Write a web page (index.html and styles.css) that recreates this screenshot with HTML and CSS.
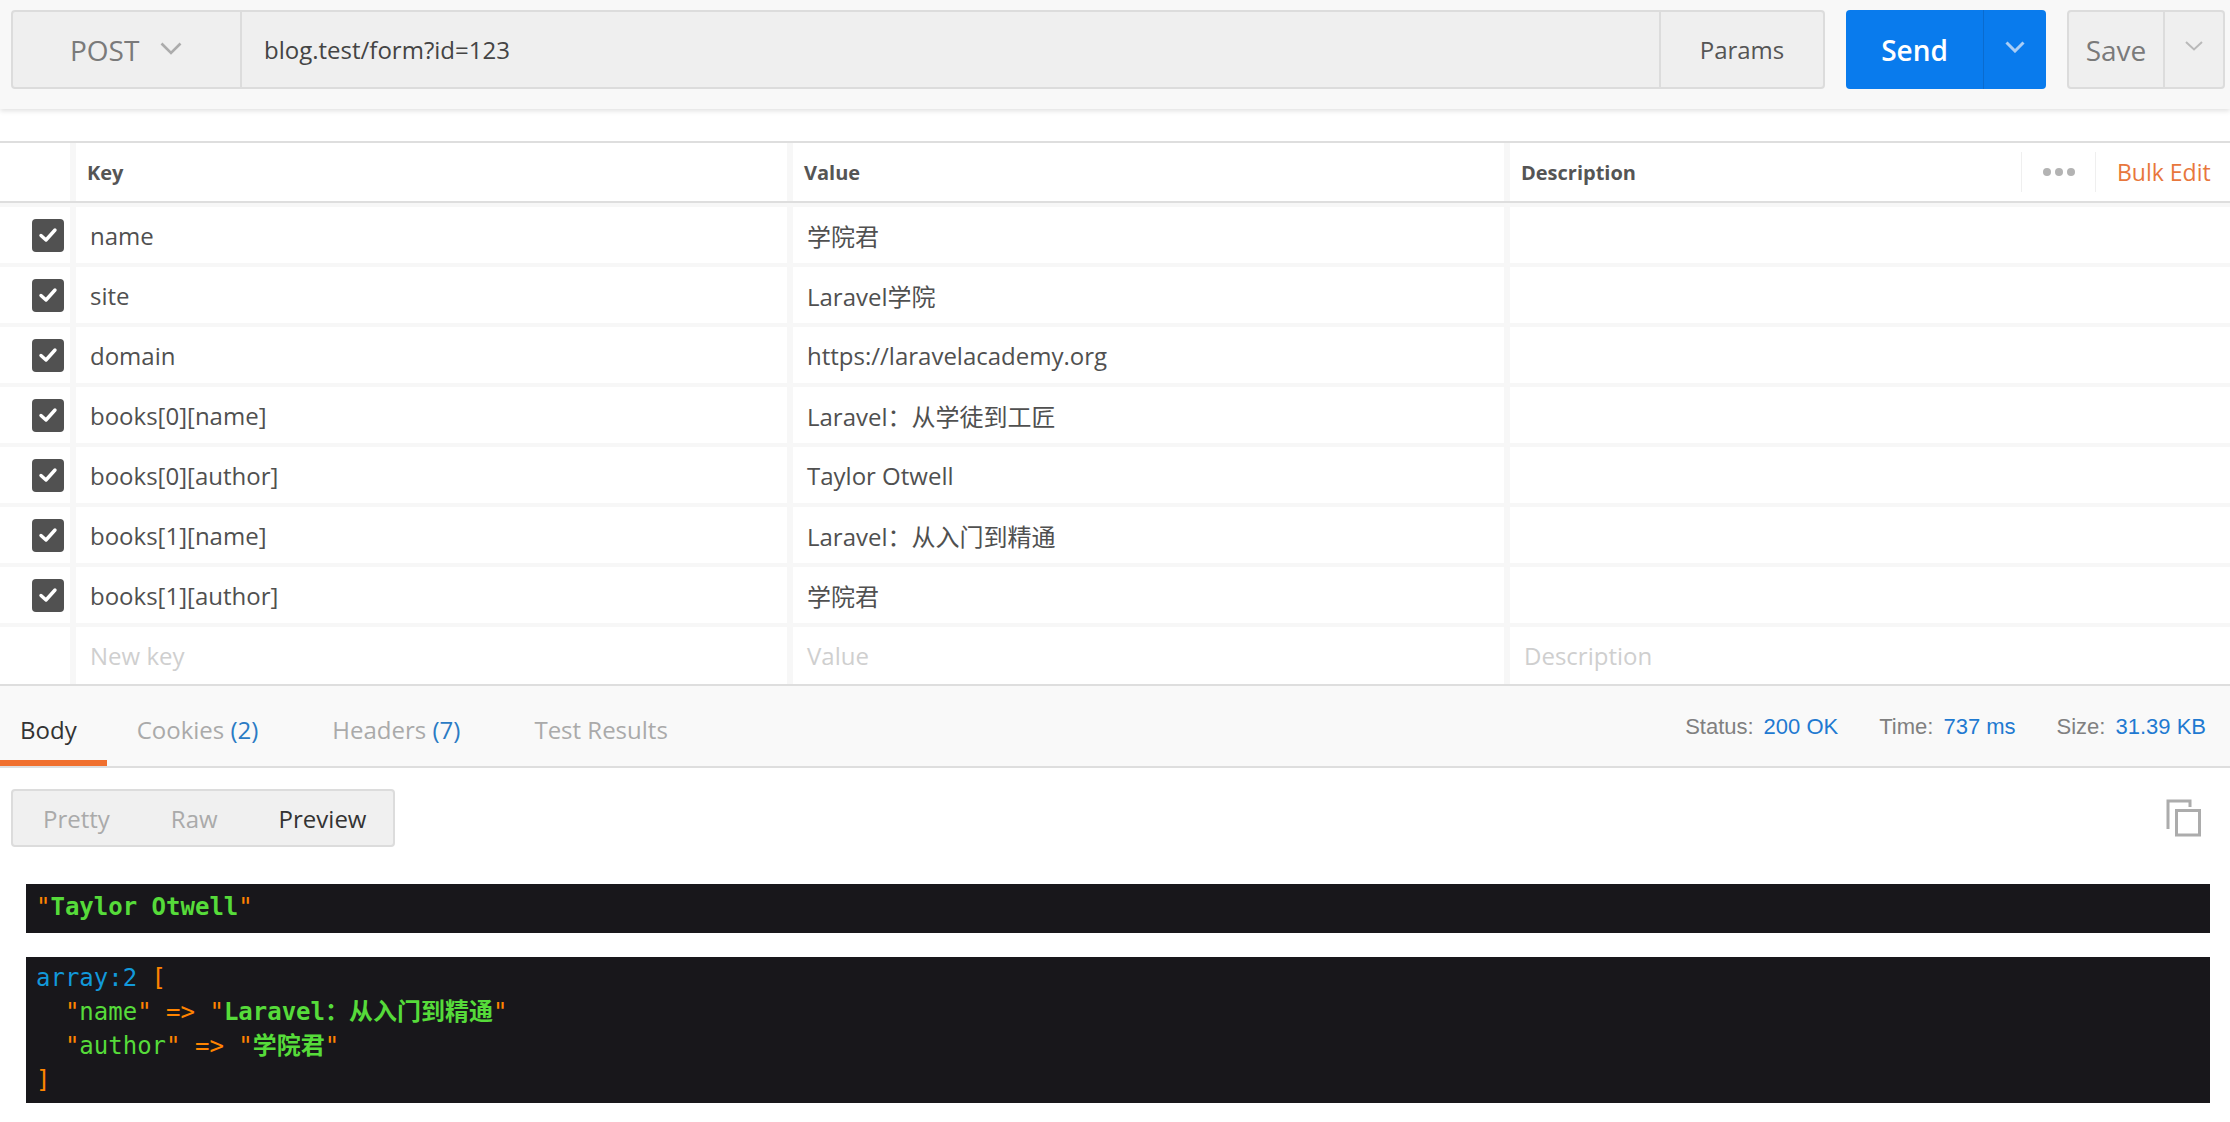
FILE: index.html
```html
<!DOCTYPE html>
<html lang="zh">
<head>
<meta charset="utf-8">
<title>Postman</title>
<link rel="stylesheet" href="styles.css">
</head>
<body>
<header class="topbar">
  <div class="req-group">
    <div class="method">
      <span>POST</span>
      <svg class="chev" width="22" height="13" viewBox="0 0 22 13"><path d="M1.5 1.5 L11 11 L20.5 1.5" fill="none" stroke="#acacac" stroke-width="2.6"/></svg>
    </div>
    <div class="url">blog.test/form?id=123</div>
    <div class="params">Params</div>
  </div>
  <div class="send">
    <div class="send-main">Send</div>
    <div class="send-drop"><svg width="20" height="12" viewBox="0 0 20 12"><path d="M1.5 1.5 L10 10 L18.5 1.5" fill="none" stroke="#a9cdf5" stroke-width="3"/></svg></div>
  </div>
  <div class="save">
    <div class="save-main">Save</div>
    <div class="save-drop"><svg width="20" height="12" viewBox="0 0 20 12"><path d="M2 2 L10 9.5 L18 2" fill="none" stroke="#b9b9b9" stroke-width="2"/></svg></div>
  </div>
</header>

<section class="kv">
  <div class="kv-row kv-head">
    <div class="c-check"></div>
    <div class="cell">Key</div>
    <div class="cell">Value</div>
    <div class="cell desc-head">
      <span class="desc-title">Description</span>
      <span class="dots"><i></i><i></i><i></i></span>
      <span class="bulk">Bulk Edit</span>
    </div>
  </div>
  <div class="kv-row">
    <div class="c-check"><span class="cb"><svg width="20" height="16" viewBox="0 0 20 16"><path d="M3 8.5 L8 13 L17 3" fill="none" stroke="#fff" stroke-width="3.4" stroke-linecap="round" stroke-linejoin="round"/></svg></span></div>
    <div class="cell">name</div><div class="cell">学院君</div><div class="cell"></div>
  </div>
  <div class="kv-row">
    <div class="c-check"><span class="cb"><svg width="20" height="16" viewBox="0 0 20 16"><path d="M3 8.5 L8 13 L17 3" fill="none" stroke="#fff" stroke-width="3.4" stroke-linecap="round" stroke-linejoin="round"/></svg></span></div>
    <div class="cell">site</div><div class="cell">Laravel学院</div><div class="cell"></div>
  </div>
  <div class="kv-row">
    <div class="c-check"><span class="cb"><svg width="20" height="16" viewBox="0 0 20 16"><path d="M3 8.5 L8 13 L17 3" fill="none" stroke="#fff" stroke-width="3.4" stroke-linecap="round" stroke-linejoin="round"/></svg></span></div>
    <div class="cell">domain</div><div class="cell">https://laravelacademy.org</div><div class="cell"></div>
  </div>
  <div class="kv-row">
    <div class="c-check"><span class="cb"><svg width="20" height="16" viewBox="0 0 20 16"><path d="M3 8.5 L8 13 L17 3" fill="none" stroke="#fff" stroke-width="3.4" stroke-linecap="round" stroke-linejoin="round"/></svg></span></div>
    <div class="cell">books[0][name]</div><div class="cell">Laravel：从学徒到工匠</div><div class="cell"></div>
  </div>
  <div class="kv-row">
    <div class="c-check"><span class="cb"><svg width="20" height="16" viewBox="0 0 20 16"><path d="M3 8.5 L8 13 L17 3" fill="none" stroke="#fff" stroke-width="3.4" stroke-linecap="round" stroke-linejoin="round"/></svg></span></div>
    <div class="cell">books[0][author]</div><div class="cell">Taylor Otwell</div><div class="cell"></div>
  </div>
  <div class="kv-row">
    <div class="c-check"><span class="cb"><svg width="20" height="16" viewBox="0 0 20 16"><path d="M3 8.5 L8 13 L17 3" fill="none" stroke="#fff" stroke-width="3.4" stroke-linecap="round" stroke-linejoin="round"/></svg></span></div>
    <div class="cell">books[1][name]</div><div class="cell">Laravel：从入门到精通</div><div class="cell"></div>
  </div>
  <div class="kv-row">
    <div class="c-check"><span class="cb"><svg width="20" height="16" viewBox="0 0 20 16"><path d="M3 8.5 L8 13 L17 3" fill="none" stroke="#fff" stroke-width="3.4" stroke-linecap="round" stroke-linejoin="round"/></svg></span></div>
    <div class="cell">books[1][author]</div><div class="cell">学院君</div><div class="cell"></div>
  </div>
  <div class="kv-row kv-new">
    <div class="c-check"></div>
    <div class="cell ph">New key</div><div class="cell ph">Value</div><div class="cell ph">Description</div>
  </div>
</section>

<section class="resp-bar">
  <nav class="tabs">
    <span class="tab active">Body</span>
    <span class="tab">Cookies <b>(2)</b></span>
    <span class="tab">Headers <b>(7)</b></span>
    <span class="tab">Test Results</span>
  </nav>
  <div class="meta">
    <span class="lbl">Status:</span><span class="val">200 OK</span>
    <span class="lbl">Time:</span><span class="val">737 ms</span>
    <span class="lbl">Size:</span><span class="val">31.39 KB</span>
  </div>
</section>

<div class="view-row">
  <div class="seg">
    <span class="seg-item">Pretty</span>
    <span class="seg-item">Raw</span>
    <span class="seg-item on">Preview</span>
  </div>
  <svg class="copy" width="36" height="38" viewBox="0 0 36 38"><path d="M2 30 V2 H24 V8" fill="none" stroke="#acacac" stroke-width="3"/><rect x="10.5" y="11.5" width="23" height="24.5" fill="none" stroke="#acacac" stroke-width="3"/></svg>
</div>

<pre class="dump one"><span class="q">"</span><span class="str">Taylor Otwell</span><span class="q">"</span></pre>
<pre class="dump two"><span class="note">array:2</span> <span class="q">[</span>
  <span class="q">"</span><span class="key">name</span><span class="q">"</span> <span class="q">=&gt;</span> <span class="q">"</span><span class="str">Laravel：从入门到精通</span><span class="q">"</span>
  <span class="q">"</span><span class="key">author</span><span class="q">"</span> <span class="q">=&gt;</span> <span class="q">"</span><span class="str">学院君</span><span class="q">"</span>
<span class="q">]</span></pre>
</body>
</html>
```

FILE: styles.css
```css
* { box-sizing: border-box; }
html, body { margin: 0; padding: 0; }
body {
  width: 2230px;
  height: 1122px;
  overflow: hidden;
  background: #fff;
  font-family: "Open Sans", "Noto Sans CJK SC", sans-serif;
  color: #505050;
}

/* ---------- top bar ---------- */
.topbar {
  height: 109px;
  background: #f8f8f8;
  display: flex;
  align-items: flex-start;
  padding: 10px 5px 0 11px;
  box-shadow: 0 2px 5px rgba(0, 0, 0, 0.12);
  position: relative;
}
.req-group {
  flex: 1;
  height: 79px;
  display: flex;
  background: #efefef;
  border: 2px solid #dcdcdc;
  border-radius: 4px;
}
.method {
  width: 229px;
  border-right: 2px solid #dcdcdc;
  display: flex;
  align-items: center;
  padding-left: 57px;
  font-size: 28px;
  color: #7a7a7a;
}
.method .chev { margin-left: 21px; margin-top: -2px; }
.url {
  flex: 1;
  display: flex;
  align-items: center;
  padding-left: 22px;
  font-size: 24px;
  color: #444;
}
.params {
  width: 164px;
  border-left: 2px solid #dcdcdc;
  display: flex;
  align-items: center;
  justify-content: center;
  font-size: 24px;
  color: #555;
}
.send {
  margin-left: 21px;
  width: 200px;
  height: 79px;
  display: flex;
  background: #097bed;
  border-radius: 4px;
}
.send-main {
  width: 138px;
  display: flex;
  align-items: center;
  justify-content: center;
  color: #fff;
  font-size: 28px;
  font-weight: 600;
  border-right: 1px solid #0a6bcf;
}
.send-drop {
  flex: 1;
  display: flex;
  align-items: center;
  justify-content: center;
  padding-bottom: 6px;
}
.save {
  margin-left: 21px;
  width: 158px;
  height: 79px;
  display: flex;
  background: #efefef;
  border: 2px solid #dcdcdc;
  border-radius: 4px;
}
.save-main {
  width: 96px;
  border-right: 2px solid #dcdcdc;
  display: flex;
  align-items: center;
  justify-content: center;
  font-size: 28px;
  color: #7a7a7a;
}
.save-drop {
  flex: 1;
  display: flex;
  align-items: center;
  justify-content: center;
  padding-bottom: 8px;
}

/* ---------- key/value table ---------- */
.kv {
  margin-top: 32px;
  border-top: 2px solid #dedede;
}
.kv-row {
  display: grid;
  grid-template-columns: 70px 717px 717px 1fr;
  height: 60px;
  border-top: 4px solid #f7f7f7;
}
.kv-head {
  height: 60px;
  border-top: 0;
  border-bottom: 2px solid #dedede;
}
.kv-head .cell {
  font-size: 20px;
  font-weight: 700;
  color: #555;
  padding-left: 11px;
}
.c-check {
  display: flex;
  align-items: center;
  justify-content: flex-end;
  padding-right: 6px;
}
.cb {
  width: 32px;
  height: 33px;
  background: #515151;
  border-radius: 4px;
  display: flex;
  align-items: center;
  justify-content: center;
}
.cell {
  border-left: 6px solid #f7f7f7;
  display: flex;
  align-items: center;
  padding-left: 14px;
  font-size: 24px;
  color: #505050;
  white-space: nowrap;
}
.kv-new { height: 61px; }
.ph { color: #cfcfcf; }
.desc-head { padding-right: 0; }
.desc-title { flex: 1; }
.dots {
  width: 75px;
  height: 40px;
  border-left: 1px solid #efefef;
  border-right: 1px solid #efefef;
  display: flex;
  align-items: center;
  justify-content: center;
  gap: 4px;
}
.dots i {
  width: 8px;
  height: 8px;
  border-radius: 50%;
  background: #b3b3b3;
}
.bulk {
  width: 134px;
  padding-left: 21px;
  font-size: 23px;
  font-weight: 400;
  color: #e8773c;
}

/* ---------- response bar ---------- */
.resp-bar {
  height: 84px;
  background: #f9f9f9;
  border-top: 2px solid #dedede;
  border-bottom: 2px solid #dedede;
  display: flex;
  justify-content: space-between;
}
.tabs { display: flex; height: 80px; }
.tab {
  display: flex;
  align-items: center;
  padding: 12px 44px 0 30px;
  font-size: 24px;
  color: #aaa;
  white-space: pre;
  border-bottom: 6px solid transparent;
}
.tab b { font-weight: 400; color: #2b7bc4; }
.tab.active {
  padding-left: 20px;
  padding-right: 30px;
  color: #333;
  border-bottom-color: #f0702e;
}
.meta {
  display: flex;
  align-items: center;
  padding-right: 24px;
  padding-top: 2px;
  font-family: "Liberation Sans", Arial, sans-serif;
  font-size: 22px;
}
.meta .lbl { color: #808080; margin-right: 10px; }
.meta .val { color: #1f7ad1; margin-right: 41px; }
.meta .val:last-child { margin-right: 0; }

/* ---------- view row ---------- */
.view-row {
  display: flex;
  justify-content: space-between;
  align-items: flex-start;
  padding: 21px 28px 0 11px;
}
.seg {
  width: 384px;
  height: 58px;
  background: #f0f0f0;
  border: 2px solid #dcdcdc;
  border-radius: 4px;
  display: flex;
  align-items: center;
  padding-left: 30px;
  font-size: 24px;
}
.seg-item { color: #aaa; margin-right: 61px; }
.seg-item.on { color: #333; margin-right: 0; }
.copy { margin-top: 10px; }

/* ---------- dumps ---------- */
.dump {
  margin: 0 20px 0 26px;
  background: #18171b;
  font-family: "DejaVu Sans Mono", "Noto Sans CJK SC", monospace;
  font-size: 24px;
  color: #ff8400;
  padding: 0 10px;
  white-space: pre;
}
.dump.one {
  margin-top: 37px;
  height: 49px;
  line-height: 47px;
  padding-top: 0;
}
.dump.two {
  margin-top: 24px;
  height: 146px;
  line-height: 34px;
  padding-top: 4px;
}
.dump .q { color: #ff8400; }
.dump .str { color: #56db3a; font-weight: bold; }
.dump .key { color: #56db3a; }
.dump .note { color: #1299da; }
```
